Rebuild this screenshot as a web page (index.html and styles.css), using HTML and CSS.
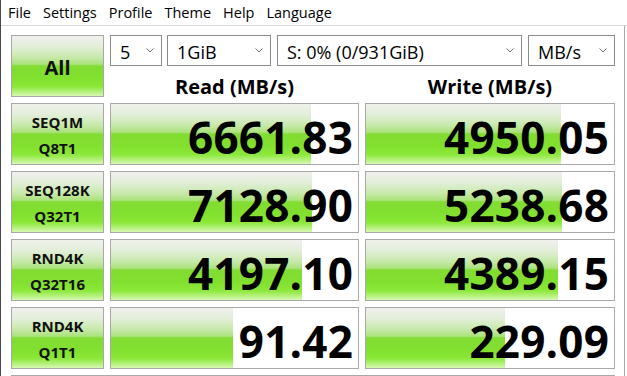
FILE: index.html
```html
<!DOCTYPE html>
<html>
<head>
<meta charset="utf-8">
<link rel="stylesheet" href="styles.css">
</head>
<body>
<div class="window">
  <div class="menubar">
    <span class="menu-item">File</span>
    <span class="menu-item">Settings</span>
    <span class="menu-item">Profile</span>
    <span class="menu-item">Theme</span>
    <span class="menu-item">Help</span>
    <span class="menu-item">Language</span>
  </div>
  <div class="main">
    <div class="board">
      <div class="btn btn-all">All</div>
      <div class="top">
        <div class="selects">
          <div class="select w-count"><span>5</span><svg class="chev" width="8" height="5" viewBox="0 0 8 5"><polyline points="0.5,0.5 4,4 7.5,0.5" fill="none" stroke="#707070" stroke-width="1"/></svg></div>
          <div class="select w-size"><span>1GiB</span><svg class="chev" width="8" height="5" viewBox="0 0 8 5"><polyline points="0.5,0.5 4,4 7.5,0.5" fill="none" stroke="#707070" stroke-width="1"/></svg></div>
          <div class="select w-drive"><span>S: 0% (0/931GiB)</span><svg class="chev" width="8" height="5" viewBox="0 0 8 5"><polyline points="0.5,0.5 4,4 7.5,0.5" fill="none" stroke="#707070" stroke-width="1"/></svg></div>
          <div class="select w-unit"><span>MB/s</span><svg class="chev" width="8" height="5" viewBox="0 0 8 5"><polyline points="0.5,0.5 4,4 7.5,0.5" fill="none" stroke="#707070" stroke-width="1"/></svg></div>
        </div>
        <div class="headers">
          <div class="head">Read (MB/s)</div>
          <div class="head">Write (MB/s)</div>
        </div>
      </div>

      <div class="btn label">SEQ1M<br>Q8T1</div>
      <div class="result" style="background-size: 200px 100%">6661.83</div>
      <div class="result" style="background-size: 195px 100%">4950.05</div>

      <div class="btn label">SEQ128K<br>Q32T1</div>
      <div class="result" style="background-size: 201px 100%">7128.90</div>
      <div class="result" style="background-size: 196px 100%">5238.68</div>

      <div class="btn label">RND4K<br>Q32T16</div>
      <div class="result" style="background-size: 191px 100%">4197.10</div>
      <div class="result" style="background-size: 192px 100%">4389.15</div>

      <div class="btn label">RND4K<br>Q1T1</div>
      <div class="result" style="background-size: 122px 100%">91.42</div>
      <div class="result" style="background-size: 139px 100%">229.09</div>

      <div class="comment"></div>
    </div>
  </div>
</div>
</body>
</html>
```

FILE: styles.css
```css
html, body {
  margin: 0;
  padding: 0;
  background: #ffffff;
  overflow: hidden;
}

body {
  width: 627px;
  height: 376px;
  font-family: "Open Sans", "Noto Sans", sans-serif;
  color: #000;
}

.window {
  height: 376px;
  border-left: 1px solid #4a4a4a;
  box-sizing: border-box;
  overflow: hidden;
}

.menubar {
  height: 26px;
  box-sizing: border-box;
  padding: 3px 0 0 7px;
  display: flex;
  gap: 12px;
  font-size: 14.5px;
  line-height: 20px;
  border-bottom: 1px solid #dadada;
}

.main {
  width: 624px;
  height: 350px;
  box-sizing: border-box;
  padding: 9px 0 0 10px;
  border-right: 1px solid #a8a8a8;
  overflow: hidden;
}

.board {
  display: grid;
  grid-template-columns: 93px 249px 250px;
  grid-auto-rows: 62px;
  column-gap: 6px;
  row-gap: 6px;
}

.btn,
.result {
  box-sizing: border-box;
  border: 1px solid #a8a8a8;
  background-image: linear-gradient(to bottom,
    #f0f1ee 0%,
    #e2eed9 18%,
    #c6e9a9 36%,
    #abe27c 47%,
    #82dc32 50%,
    #82e02f 70%,
    #8be838 84%,
    #b4f07c 93%,
    #d8f8b4 100%);
  background-repeat: no-repeat;
}

.btn {
  display: flex;
  align-items: center;
  justify-content: center;
  text-align: center;
  font-weight: 700;
  color: #111;
}

.btn-all {
  font-size: 20px;
  padding-top: 2px;
}

.label {
  font-size: 15px;
  line-height: 26px;
  padding-top: 1px;
}

.result {
  background-color: #ffffff;
  text-align: right;
  font-size: 44px;
  font-weight: 700;
  line-height: 56px;
  padding: 5px 5px 0 0;
  letter-spacing: 0.2px;
}

.top {
  grid-column: 2 / 4;
  display: flex;
  flex-direction: column;
}

.selects {
  display: flex;
  height: 31px;
}

.select {
  box-sizing: border-box;
  height: 31px;
  border: 1px solid #8c8c8c;
  display: flex;
  align-items: center;
  justify-content: space-between;
  padding: 3px 7px 0 9px;
  font-size: 18px;
  background: #fff;
}

.select .chev {
  margin-top: -3px;
}

.w-count { width: 52px; margin-right: 5px; }
.w-size { width: 104px; margin-right: 6px; }
.w-drive { width: 245px; margin-right: 6px; }
.w-unit { width: 87px; }

.headers {
  display: grid;
  grid-template-columns: 249px 250px;
  column-gap: 6px;
}

.head {
  text-align: center;
  font-size: 20px;
  font-weight: 700;
  line-height: 27px;
  padding-top: 7px;
}

.comment {
  grid-column: 1 / 4;
  border: 1px solid #a8a8a8;
  border-bottom: none;
  height: 10px;
}
```
